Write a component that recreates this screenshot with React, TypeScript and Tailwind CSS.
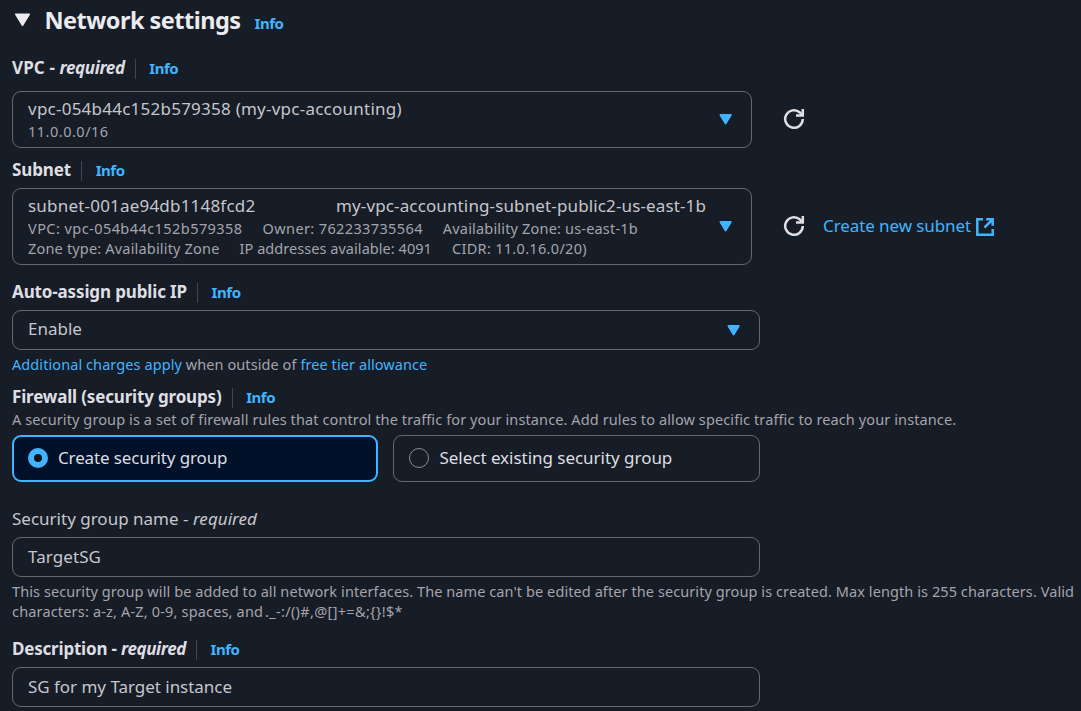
import React from "react";

function Info({ className = "" }: { className?: string }) {
  return (
    <a className={"text-[15px] font-bold tracking-[-0.44px] text-[#42b4ff] " + className}>Info</a>
  );
}

function Label({ children }: { children: React.ReactNode }) {
  return (
    <div className="flex h-6 items-center">
      <span className="whitespace-pre text-[17px] font-bold text-[#dedee3]">{children}</span>
      <span className="ml-[10px] mt-[2px] h-5 w-px bg-[#424650]" />
      <Info className="ml-[13.6px]" />
    </div>
  );
}

function Caret() {
  return (
    <svg className="shrink-0" width="13" height="11" viewBox="0 0 13 11">
      <path d="M1.4 1h10.4L6.6 9.6z" fill="#42b4ff" stroke="#42b4ff" strokeWidth="1.8" strokeLinejoin="round" />
    </svg>
  );
}

function Refresh() {
  return (
    <svg className="shrink-0" width="22" height="22" viewBox="0 0 22 22" fill="none" stroke="#dedee3" strokeWidth="2.5">
      <path d="M19.8 11a8.8 8.8 0 1 1-2.9-6.5L19 6.8" />
      <path d="M19.8 1v6.6H13" />
    </svg>
  );
}

function External() {
  return (
    <svg className="shrink-0" width="18" height="18" viewBox="0 0 18 18" fill="none" stroke="#42b4ff" strokeWidth="2.5">
      <path d="M7 1.3H1.3v15.4h15.4V11" />
      <path d="M10.2 1.3h6.5v6.5M16.5 1.5 8.4 9.6" />
    </svg>
  );
}

const box = "flex items-center rounded-[9px] border border-[#656871] pl-[15px] pr-[19px] text-[17px] text-[#c6c6cd]";

export default function App() {
  return (
    <main className="flex h-[711px] w-[1081px] flex-col overflow-hidden bg-[#161d26] pl-3 font-['Noto_Sans',sans-serif] whitespace-nowrap">
      <header className="flex h-10 shrink-0 items-center">
        <svg className="ml-[2px] shrink-0" width="17" height="14" viewBox="0 0 17 14">
          <path d="M1.8 1.3h13.4L8.5 12.4z" fill="#ebebf0" stroke="#ebebf0" strokeWidth="1.6" strokeLinejoin="round" />
        </svg>
        <h2 className="ml-[13.5px] mt-[2px] text-[23.5px] font-bold tracking-[-0.53px] text-[#ebebf0]">Network settings</h2>
        <Info className="ml-[14px] mt-[7px]" />
      </header>

      <section className="mt-4">
        <Label>
          <span className="tracking-[0.13px]">VPC - </span>
          <em className="tracking-[-0.39px]">required</em>
        </Label>
        <div className="mt-[11px] flex items-center">
          <div className={box + " h-[57px] w-[740px] justify-between"}>
            <div>
              <p className="h-[23px] leading-[23px] tracking-[0.24px]">vpc-054b44c152b579358 (my-vpc-accounting)</p>
              <p className="h-[22px] text-[14.5px] leading-[22px] tracking-[0.5px] text-[#a4a4ad]">11.0.0.0/16</p>
            </div>
            <Caret />
          </div>
          <div className="ml-[31px] mt-[-2px]"><Refresh /></div>
        </div>
      </section>

      <section className="mt-[10px]">
        <Label><span className="tracking-[-0.12px]">Subnet</span></Label>
        <div className="mt-[6px] flex items-center">
          <div className={box + " h-[77px] w-[740px] justify-between"}>
            <div>
              <div className="mb-px flex h-[22px] leading-[22px]">
                <span className="w-[308px] tracking-[0.2px]">subnet-001ae94db1148fcd2</span>
                <span className="tracking-[0.13px]">my-vpc-accounting-subnet-public2-us-east-1b</span>
              </div>
              <div className="flex h-5 gap-5 text-[14.5px] leading-5 text-[#a4a4ad]">
                <span className="tracking-[0.44px]">VPC: vpc-054b44c152b579358</span>
                <span className="tracking-[0.38px]">Owner: 762233735564</span>
                <span className="tracking-[0.182px]">Availability Zone: us-east-1b</span>
              </div>
              <div className="flex h-5 gap-5 text-[14.5px] leading-5 text-[#a4a4ad]">
                <span className="tracking-[0.18px]">Zone type: Availability Zone</span>
                <span className="tracking-[0.05px]">IP addresses available: 4091</span>
                <span className="tracking-[0.311px]">CIDR: 11.0.16.0/20)</span>
              </div>
            </div>
            <Caret />
          </div>
          <div className="ml-[31px] mt-[-2px]"><Refresh /></div>
          <a className="ml-[18px] flex items-center text-[17px] tracking-[-0.09px] text-[#42b4ff]">
            <span className="mt-[-2px]">Create new subnet</span>
            <span className="ml-[5px]"><External /></span>
          </a>
        </div>
      </section>

      <section className="mt-[15px]">
        <Label><span className="tracking-[-0.136px]">Auto-assign public IP</span></Label>
        <div className={box + " mt-[6px] h-10 w-[748px] justify-between"}>
          <span className="mt-[-2px]">Enable</span>
          <Caret />
        </div>
        <p className="mt-[4px] mb-px h-5 text-[14.5px] leading-5 tracking-[0.08px] text-[#a4a4ad]">
          <a className="text-[#42b4ff]">Additional charges apply</a> when outside of <a className="text-[#42b4ff]">free tier allowance</a>
        </p>
      </section>

      <section className="mt-[10px]">
        <Label><span className="tracking-[-0.17px]">Firewall (security groups)</span></Label>
        <p className="h-5 text-[14.5px] leading-5 tracking-[0.106px] text-[#a4a4ad]">
          A security group is a set of firewall rules that control the traffic for your instance. Add rules to allow specific traffic to reach your instance.
        </p>
        <div className="mt-[6px] flex gap-[15px] text-[17px] text-[#dedee3]">
          <div className="flex h-[47px] w-[366px] items-center rounded-[9px] border-2 border-[#42b4ff] bg-[#001129] pl-[14px]">
            <span className="mt-[-1px] size-5 rounded-full border-[6px] border-[#42b4ff] bg-[#0f141a]" />
            <span className="ml-[10px] mt-[-1px] tracking-[-0.13px]">Create security group</span>
          </div>
          <div className="flex h-[47px] w-[367px] items-center rounded-[9px] border border-[#656871] pl-[15px]">
            <span className="mt-[-1px] size-5 rounded-full border border-[#8c8c94]" />
            <span className="ml-[10.5px] mt-[-1px] tracking-[-0.03px]">Select existing security group</span>
          </div>
        </div>
      </section>

      <section className="mt-[25px]">
        <div className="h-6 text-[17px] leading-6 text-[#c6c6cd]">
          Security group name - <em className="tracking-[0.05px]">required</em>
        </div>
        <div className={box + " mt-[6px] h-10 w-[748px] tracking-[0.079px]"}>TargetSG</div>
        <p className="mt-[4px] mb-px h-10 text-[14.5px] leading-5 text-[#a4a4ad]">
          <span className="tracking-[0.083px]">
            This security group will be added to all network interfaces. The name can't be edited after the security group is created. Max length is 255 characters. Valid
          </span>
          <br />
          <span className="tracking-[0.17px]">{"characters: a-z, A-Z, 0-9, spaces, and "}</span>
          <span className="-ml-[2px] tracking-[0.32px]">{"._-:/()#,@[]+=&;{}!$*"}</span>
        </p>
      </section>

      <section className="mt-[15px]">
        <Label>
          <span className="tracking-[-0.2px]">Description - </span>
          <em className="tracking-[-0.4px]">required</em>
        </Label>
        <div className={box + " mt-[6px] h-10 w-[748px] tracking-[-0.029px]"}>SG for my Target instance</div>
      </section>
    </main>
  );
}
